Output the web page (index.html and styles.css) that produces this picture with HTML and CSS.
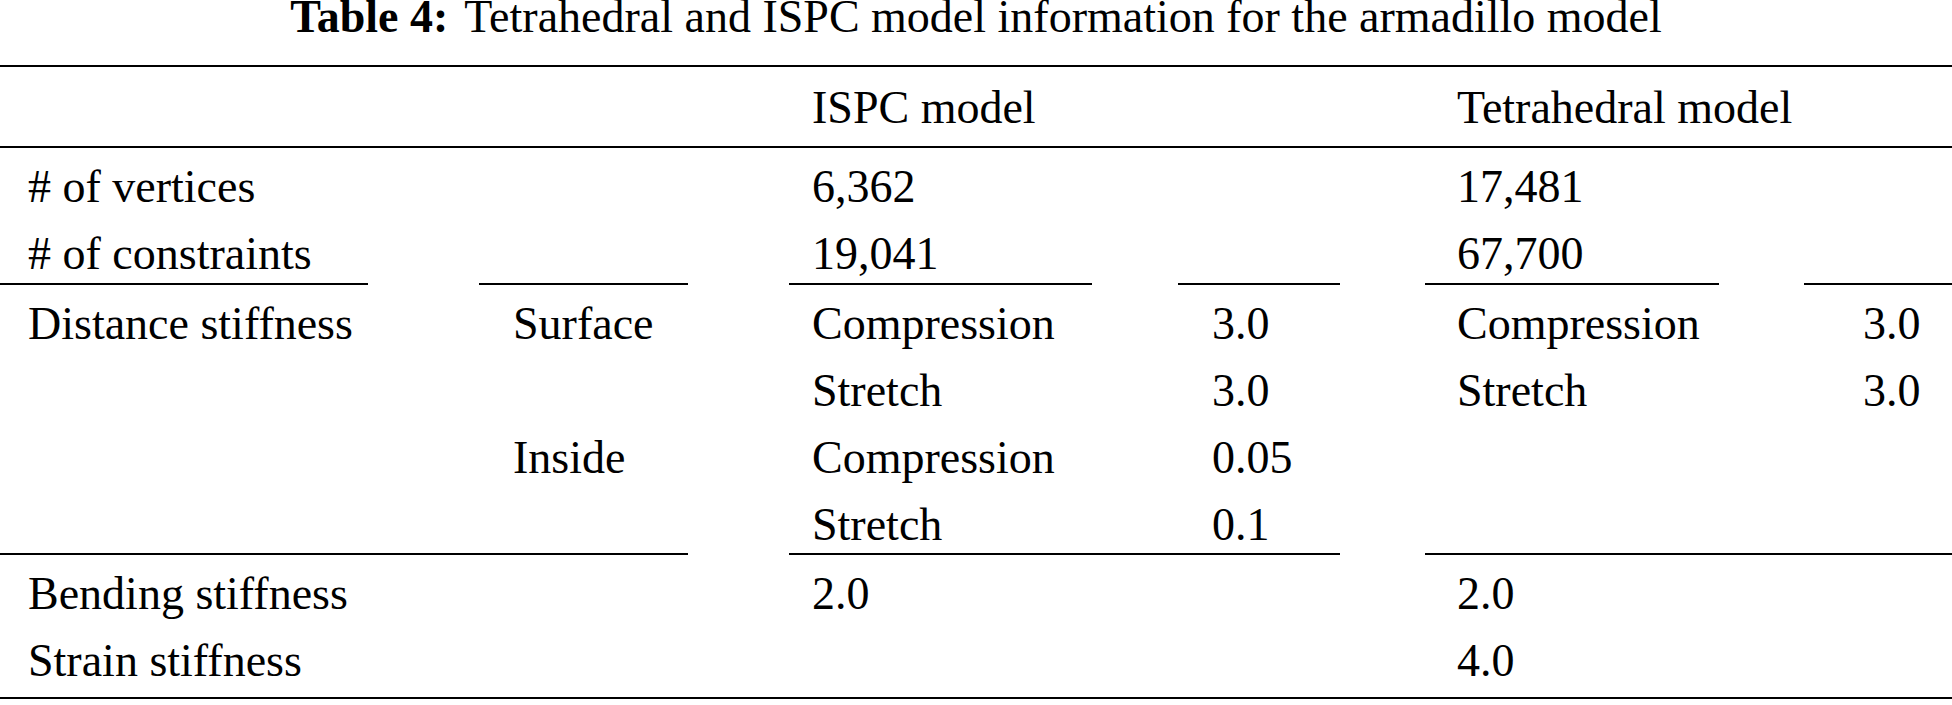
FILE: index.html
```html
<!DOCTYPE html>
<html>
<head>
<meta charset="utf-8">
<link rel="stylesheet" href="styles.css">
</head>
<body>
<div class="page">
  <div class="caption"><span class="label">Table 4:</span>Tetrahedral and ISPC model information for the armadillo model</div>
  <div class="grid">
    <div class="rule full"></div>

    <div class="cell c1 head"></div>
    <div class="cell c2 head"></div>
    <div class="cell c3 head">ISPC model</div>
    <div class="cell c4 head"></div>
    <div class="cell c5 head">Tetrahedral model</div>
    <div class="cell c6 head"></div>

    <div class="rule full"></div>

    <div class="cell c1"># of vertices</div>
    <div class="cell c2"></div>
    <div class="cell c3">6,362</div>
    <div class="cell c4"></div>
    <div class="cell c5">17,481</div>
    <div class="cell c6"></div>

    <div class="cell c1"># of constraints</div>
    <div class="cell c2"></div>
    <div class="cell c3">19,041</div>
    <div class="cell c4"></div>
    <div class="cell c5">67,700</div>
    <div class="cell c6"></div>

    <div class="rule cmid s1"></div>
    <div class="rule cmid s2"></div>
    <div class="rule cmid s3"></div>
    <div class="rule cmid s4"></div>
    <div class="rule cmid s5"></div>
    <div class="rule cmid s6"></div>

    <div class="cell c1">Distance stiffness</div>
    <div class="cell c2">Surface</div>
    <div class="cell c3">Compression</div>
    <div class="cell c4">3.0</div>
    <div class="cell c5">Compression</div>
    <div class="cell c6">3.0</div>

    <div class="cell c1"></div>
    <div class="cell c2"></div>
    <div class="cell c3">Stretch</div>
    <div class="cell c4">3.0</div>
    <div class="cell c5">Stretch</div>
    <div class="cell c6">3.0</div>

    <div class="cell c1"></div>
    <div class="cell c2">Inside</div>
    <div class="cell c3">Compression</div>
    <div class="cell c4">0.05</div>
    <div class="cell c5"></div>
    <div class="cell c6"></div>

    <div class="cell c1"></div>
    <div class="cell c2"></div>
    <div class="cell c3">Stretch</div>
    <div class="cell c4">0.1</div>
    <div class="cell c5"></div>
    <div class="cell c6"></div>

    <div class="rule g1"></div>
    <div class="rule g2"></div>
    <div class="rule g3"></div>

    <div class="cell c1">Bending stiffness</div>
    <div class="cell c2"></div>
    <div class="cell c3">2.0</div>
    <div class="cell c4"></div>
    <div class="cell c5">2.0</div>
    <div class="cell c6"></div>

    <div class="cell c1 last">Strain stiffness</div>
    <div class="cell c2 last"></div>
    <div class="cell c3 last"></div>
    <div class="cell c4 last"></div>
    <div class="cell c5 last">4.0</div>
    <div class="cell c6 last"></div>

    <div class="rule full"></div>
  </div>
</div>
</body>
</html>
```
FILE: styles.css
```css
html, body {
  margin: 0;
  padding: 0;
  background: #fff;
}

.page {
  width: 1952px;
  font-family: "Liberation Serif", "Times New Roman", serif;
  font-size: 46px;
  color: #000;
}

.caption {
  text-align: center;
  line-height: 33px;
  height: 33px;
  margin-bottom: 32px;
  white-space: nowrap;
}

.caption .label {
  font-weight: bold;
  margin-right: 16px;
}

.grid {
  display: grid;
  grid-template-columns: 479px 310px 389px 247px 379px 148px;
}

.cell {
  line-height: 46px;
  height: 46px;
  padding-top: 16px;
  padding-bottom: 5px;
  white-space: nowrap;
}

.cell.head {
  padding-top: 17.5px;
  padding-bottom: 15.5px;
}

.cell.last {
  padding-bottom: 13px;
}

.c1 { padding-left: 28px; }
.c2 { padding-left: 34px; }
.c3 { padding-left: 23px; }
.c4 { padding-left: 34px; }
.c5 { padding-left: 32px; }
.c6 { padding-left: 59px; }

.rule {
  height: 2px;
  background: #000;
}

.rule.full {
  grid-column: 1 / -1;
}

.rule.cmid {
  margin-top: 1px;
}

.s1 { margin-right: 111px; }
.s2 { margin-right: 101px; }
.s3 { margin-right: 86px; }
.s4 { margin-right: 85px; }
.s5 { margin-right: 85px; }
.s6 { margin-right: 0; }

.g1 { grid-column: 1 / 3; margin-right: 101px; }
.g2 { grid-column: 3 / 5; margin-right: 85px; }
.g3 { grid-column: 5 / 7; }
```
